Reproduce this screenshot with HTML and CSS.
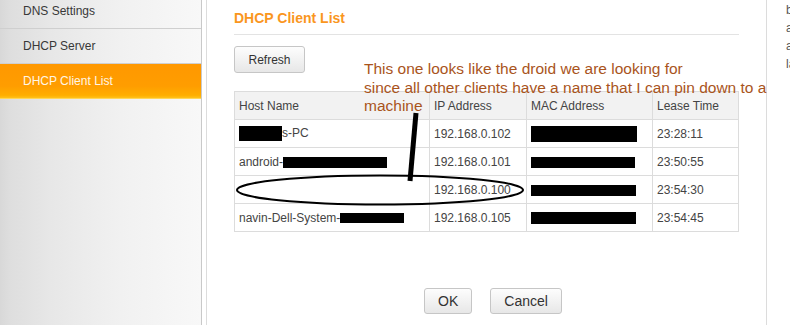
FILE: index.html
```html
<!DOCTYPE html>
<html lang="en">
  <head>
    <meta charset="UTF-8" />
    <title>DHCP Client List</title>
    <link rel="stylesheet" href="styles.css">
  </head>
  <body>
    <div class="page">
      <aside class="sidebar">
        <ul class="menu">
          <li>DNS Settings</li>
          <li>DHCP Server</li>
          <li class="active">DHCP Client List</li>
        </ul>
      </aside>

      <main class="content">
        <h2 class="title">DHCP Client List</h2>
        <button class="btn refresh">Refresh</button>

        <table class="clients">
          <colgroup>
            <col class="c-host" />
            <col class="c-ip" />
            <col class="c-mac" />
            <col class="c-lease" />
          </colgroup>
          <thead>
            <tr>
              <th>Host Name</th>
              <th>IP Address</th>
              <th>MAC Address</th>
              <th>Lease Time</th>
            </tr>
          </thead>
          <tbody>
            <tr>
              <td><span class="redact r-host1"></span>s-PC</td>
              <td>192.168.0.102</td>
              <td><span class="redact r-mac1"></span></td>
              <td>23:28:11</td>
            </tr>
            <tr>
              <td>android-<span class="redact r-host2"></span></td>
              <td>192.168.0.101</td>
              <td><span class="redact r-mac2"></span></td>
              <td>23:50:55</td>
            </tr>
            <tr>
              <td></td>
              <td>192.168.0.100</td>
              <td><span class="redact r-mac3"></span></td>
              <td>23:54:30</td>
            </tr>
            <tr>
              <td>navin-Dell-System-<span class="redact r-host4"></span></td>
              <td>192.168.0.105</td>
              <td><span class="redact r-mac4"></span></td>
              <td>23:54:45</td>
            </tr>
          </tbody>
        </table>

        <div class="actions">
          <button class="btn">OK</button>
          <button class="btn">Cancel</button>
        </div>
      </main>

      <div class="help">
        <p>be</p>
        <p>an</p>
        <p>as</p>
        <p>la</p>
      </div>
    </div>

    <!-- annotation drawn over the screenshot -->
    <div class="annotation">
      <p class="note">
        This one looks like the droid we are looking for<br />
        since all other clients have a name that I can pin down to a<br />
        machine
      </p>
      <svg class="marks" width="790" height="325" viewBox="0 0 790 325">
        <line x1="416" y1="113" x2="410" y2="181" stroke="#000" stroke-width="5" />
        <ellipse cx="380" cy="190" rx="143" ry="14.5" fill="none" stroke="#000" stroke-width="2" />
      </svg>
    </div>
  </body>
</html>
```

FILE: styles.css
```css
* {
  margin: 0;
  padding: 0;
  box-sizing: border-box;
}

body {
  position: relative;
  width: 790px;
  height: 325px;
  overflow: hidden;
  background: #fff;
  font-family: "Liberation Sans", Arial, sans-serif;
  font-size: 12px;
  color: #444;
}

.page {
  display: flex;
  height: 325px;
}

/* left menu */
.sidebar {
  flex: 0 0 202px;
  margin-right: 4px;
  border-right: 1px solid #c9c9c9;
  background: linear-gradient(
    to right,
    #d8d8d8 0,
    #dedede 10px,
    #e7e7e7 25%,
    #f1f1f1 60%,
    #f8f8f8 100%
  );
}

.menu {
  list-style: none;
  margin-top: -6px;
}

.menu li {
  height: 35px;
  line-height: 34px;
  padding-left: 23px;
  border-bottom: 1px solid #cfcfcf;
  color: #383838;
  font-size: 12px;
}

.menu li.active {
  color: #fff6e6;
  border-bottom: 1px solid #ffd65a;
  background: linear-gradient(#ff9800, #ff9d00 65%, #ffae00 92%, #ffc21a);
}

/* main panel */
.content {
  flex: 0 0 560px;
  border-left: 1px solid #dcdcdc;
  border-right: 1px solid #dcdcdc;
  padding: 10px 27px 0 27px;
}

.title {
  font-size: 14px;
  line-height: 17px;
  font-weight: bold;
  color: #fa961e;
  padding-bottom: 7px;
  border-bottom: 1px solid #e3e3e3;
}

.btn {
  display: inline-block;
  height: 26px;
  padding: 0 13px;
  font-family: "Liberation Sans", Arial, sans-serif;
  font-size: 14px;
  color: #333;
  border: 1px solid #c6c6c6;
  border-radius: 3px;
  background: linear-gradient(#fdfdfd, #e7e7e7);
}

.refresh {
  display: block;
  margin-top: 11px;
  width: 71px;
  height: 27px;
  padding: 0;
  font-size: 12px;
}

.clients {
  margin-top: 18px;
  width: 504px;
  table-layout: fixed;
  border-collapse: collapse;
}

.c-host {
  width: 195px;
}
.c-ip {
  width: 97px;
}
.c-mac {
  width: 126px;
}
.c-lease {
  width: 86px;
}

.clients th,
.clients td {
  height: 28px;
  padding: 0 4px;
  border: 1px solid #dcdcdc;
  text-align: left;
  font-weight: normal;
  white-space: nowrap;
  color: #444;
}

.clients th {
  background: #f2f2f2;
}

.redact {
  display: inline-block;
  vertical-align: middle;
  background: #000;
}

.r-host1 {
  width: 43px;
  height: 15px;
}
.r-host2 {
  width: 104px;
  height: 11px;
}
.r-host4 {
  width: 64px;
  height: 10px;
}
.r-mac1 {
  width: 106px;
  height: 16px;
}
.r-mac2 {
  width: 104px;
  height: 11px;
}
.r-mac3 {
  width: 105px;
  height: 11px;
}
.r-mac4 {
  width: 105px;
  height: 12px;
}

.actions {
  display: flex;
  justify-content: center;
  gap: 18px;
  margin-top: 56px;
  padding-left: 13px;
}

/* right help column, cut off by the window */
.help {
  flex: 0 0 60px;
  padding: 1px 0 0 19px;
  font-size: 12px;
  line-height: 18px;
  color: #555;
}

/* overlay */
.annotation {
  position: absolute;
  top: 0;
  left: 0;
  width: 790px;
  height: 325px;
  pointer-events: none;
}

.note {
  position: absolute;
  left: 364px;
  top: 60px;
  font-size: 15.5px;
  line-height: 18.5px;
  color: #a9541c;
  white-space: nowrap;
}

.marks {
  position: absolute;
  top: 0;
  left: 0;
}
```
